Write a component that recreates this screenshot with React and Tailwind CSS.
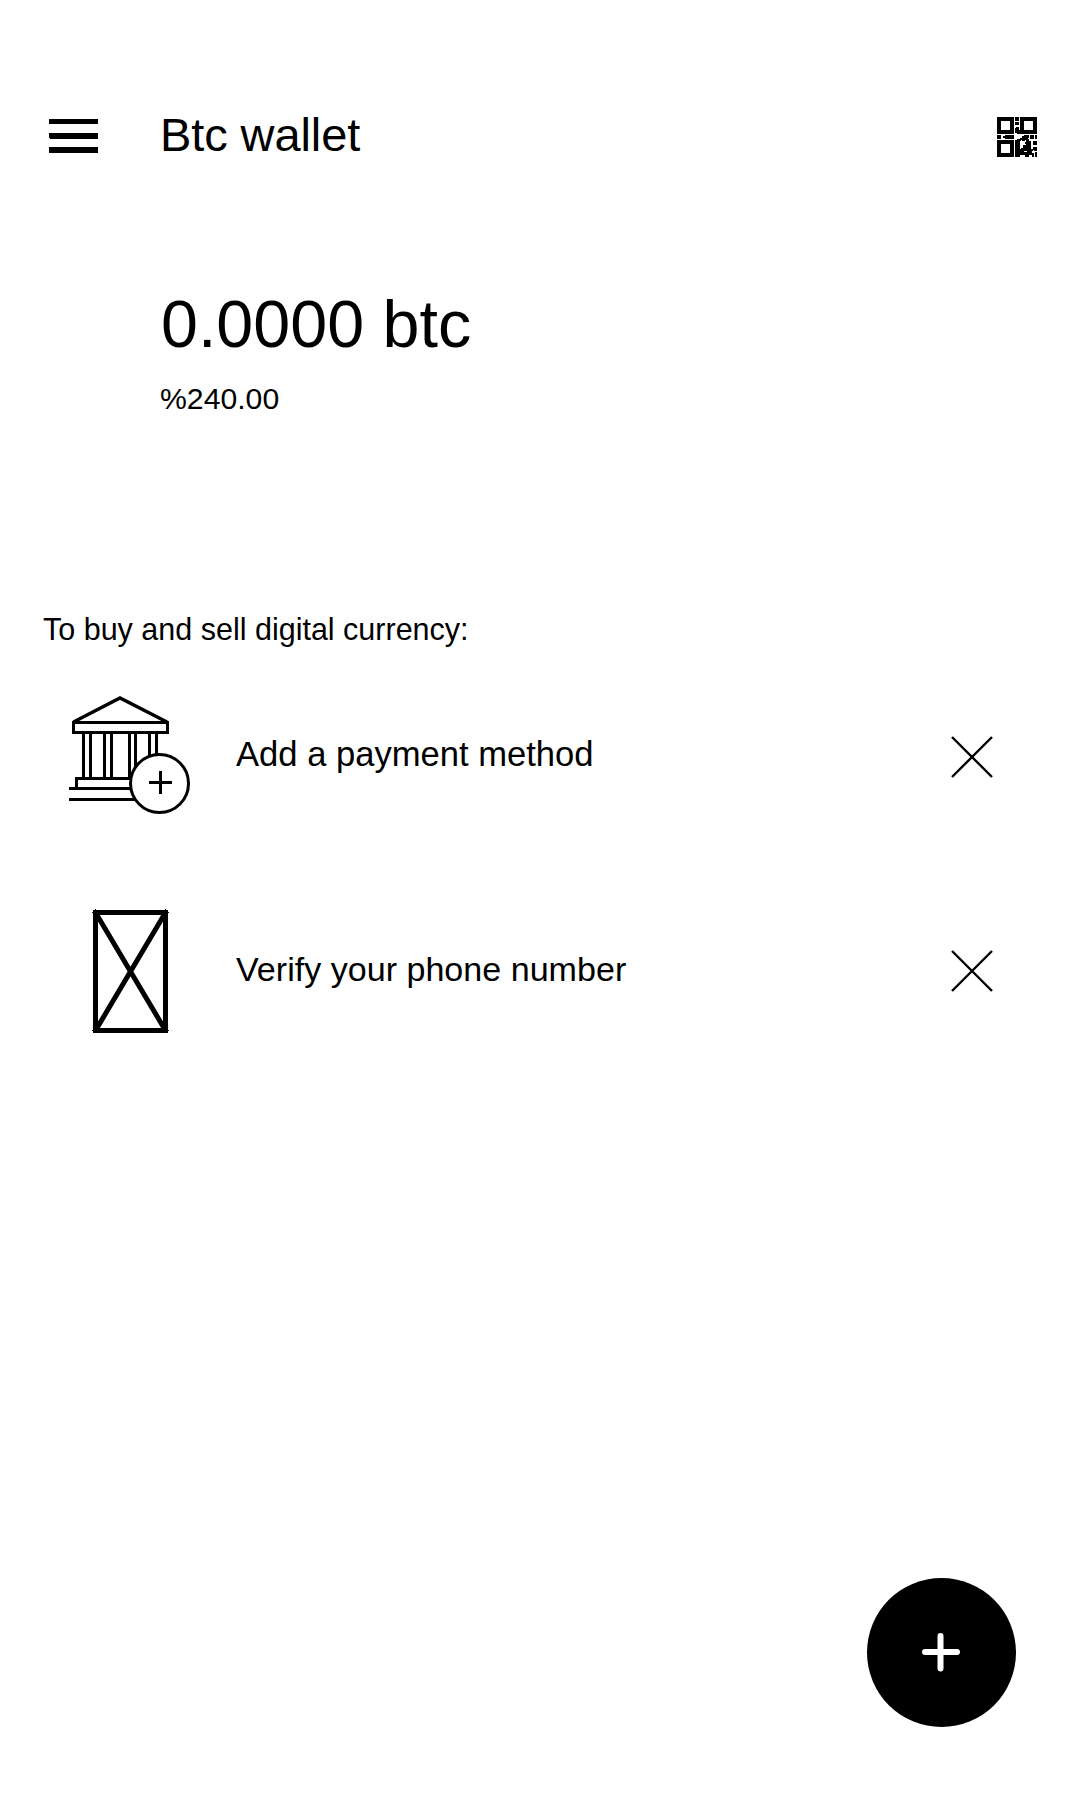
function MenuIcon() {
  return (
    <svg className="mt-[14px] ml-[49px] h-[34px] w-[49px] shrink-0" viewBox="0 0 49 34" shapeRendering="crispEdges">
      <path d="M0 0h49v5H0zM0 14h49v6H1v-1H0zM0 28h49v6H0z" />
    </svg>
  );
}

function QrIcon() {
  return (
    <svg className="mt-3 mr-[43px] ml-auto h-10 w-10 shrink-0" viewBox="36 36 120 120" shapeRendering="crispEdges">
      <path
        fillRule="evenodd"
        d="M36 36h51v51H36zM48 48v27h27V48zM105 36h51v51h-51zM117 48v27h27V48zM36 105h51v51H36zM48 117v27h27v-27z"
      />
      <path d="M90 36h12v12H90zM90 51h12v9H90zM93 66h9v9h3v12h-9v-3h-6V69h3zM36 90h12v12H36zM54 93h6v-3h27v12H60v-3h-6zM90 105h6v-3h12v6h-3v24h6v12h-6v12H90z" />
      <path d="M105 99h6v-6h6v-3h15v9h-3v6h-9v3h-9v-3h-6zM135 90h12v12h-12zM150 90h6v12h-6zM123 102h9v6h6v15h-9v-6h-9v-6h3zM144 108h12v12h-12zM114 120h9v-6h6v9h9v9h6v6h-12v3h-6v-3h-12v-3h-6v-6h6zM105 135h12v6h12v-6h12v9h6v12h-6v-6h-9v6h-12v-6h-15zM144 126h12v12h-9v-3h-3zM150 141h6v15h-6z" />
    </svg>
  );
}

function BankIcon() {
  return (
    <svg className="ml-[67px] h-[118px] w-[124px] shrink-0" viewBox="67 696 124 118" fill="none" stroke="black" strokeWidth="3">
      <path strokeWidth="3.400" d="M73.5 722 120 698l47 24" />
      <path
        shapeRendering="crispEdges"
        d="M73.5 722.5h94v10h-94zM83.5 732v46M90.5 732v46M104.5 732v46M111.5 732v46M129.5 732v46M135.5 732v40M149.5 732v30M156.5 732v30M76.5 788v-9.500H135M69 788.500h70M69 799.500h70"
      />
      <circle cx="159.500" cy="783.500" r="29" fill="white" />
      <path shapeRendering="crispEdges" d="M149 782.500h23M160.500 771v23" />
    </svg>
  );
}

function PhoneIcon() {
  return (
    <svg className="ml-[92px] h-[124px] w-[77px] shrink-0" viewBox="92 909 77 124" fill="none" stroke="black" strokeWidth="5">
      <path shapeRendering="crispEdges" d="M95.500 912.500h70v118h-70z" />
      <path d="M95.500 912.500l70 118M165.500 912.500l-70 118" />
      <path strokeWidth="1" d="M92 912.500h77M92 1030.500h77M95.500 909v124M165.500 909v124" />
    </svg>
  );
}

function CloseIcon() {
  return (
    <svg className="h-[42px] w-[42px] shrink-0" viewBox="0 0 42 42" stroke="black" strokeWidth="2.400">
      <path d="M1 1l40 40M41 1L1 41" />
    </svg>
  );
}

export default function App() {
  return (
    <main className="flex h-[1800px] w-[1080px] flex-col overflow-hidden bg-white font-['Liberation_Sans',Arial,sans-serif] whitespace-nowrap text-black">
      <header className="mt-[105px] flex h-[60px] items-start">
        <MenuIcon />
        <h1 className="ml-[62px] text-[47px] leading-[60px] tracking-[-0.1px]">Btc wallet</h1>
        <QrIcon />
      </header>

      <section className="mt-[119px] ml-[160px]">
        <p className="ml-px text-[66.400px] leading-[80px]">0.0000 btc</p>
        <p className="mt-[15px] text-[30.200px] leading-[40px]">%240.00</p>
      </section>

      <section className="mt-[190px]">
        <h2 className="ml-[43px] text-[30.500px] leading-[40px]">To buy and sell digital currency:</h2>
        <div className="mt-[47px] flex h-[118px] items-center">
          <BankIcon />
          <p className="mb-[2px] ml-[45px] text-[34.600px] leading-[40px]">Add a payment method</p>
          <div className="mt-[3px] mr-[87px] ml-auto">
            <CloseIcon />
          </div>
        </div>
        <div className="mt-[95px] flex h-[124px] items-center">
          <PhoneIcon />
          <p className="mb-[4px] ml-[67px] text-[34.100px] leading-[40px]">Verify your phone number</p>
          <div className="mr-[87px] ml-auto">
            <CloseIcon />
          </div>
        </div>
      </section>

      <button aria-label="Add" className="mt-auto mr-[64px] mb-[73px] flex size-[149px] items-center justify-center self-end rounded-full bg-black">
        <svg className="size-[39px]" viewBox="0 0 39 39" stroke="white" strokeWidth="6" strokeLinecap="round">
          <path d="M18.500 3v32.500M3 19h32" />
        </svg>
      </button>
    </main>
  );
}
